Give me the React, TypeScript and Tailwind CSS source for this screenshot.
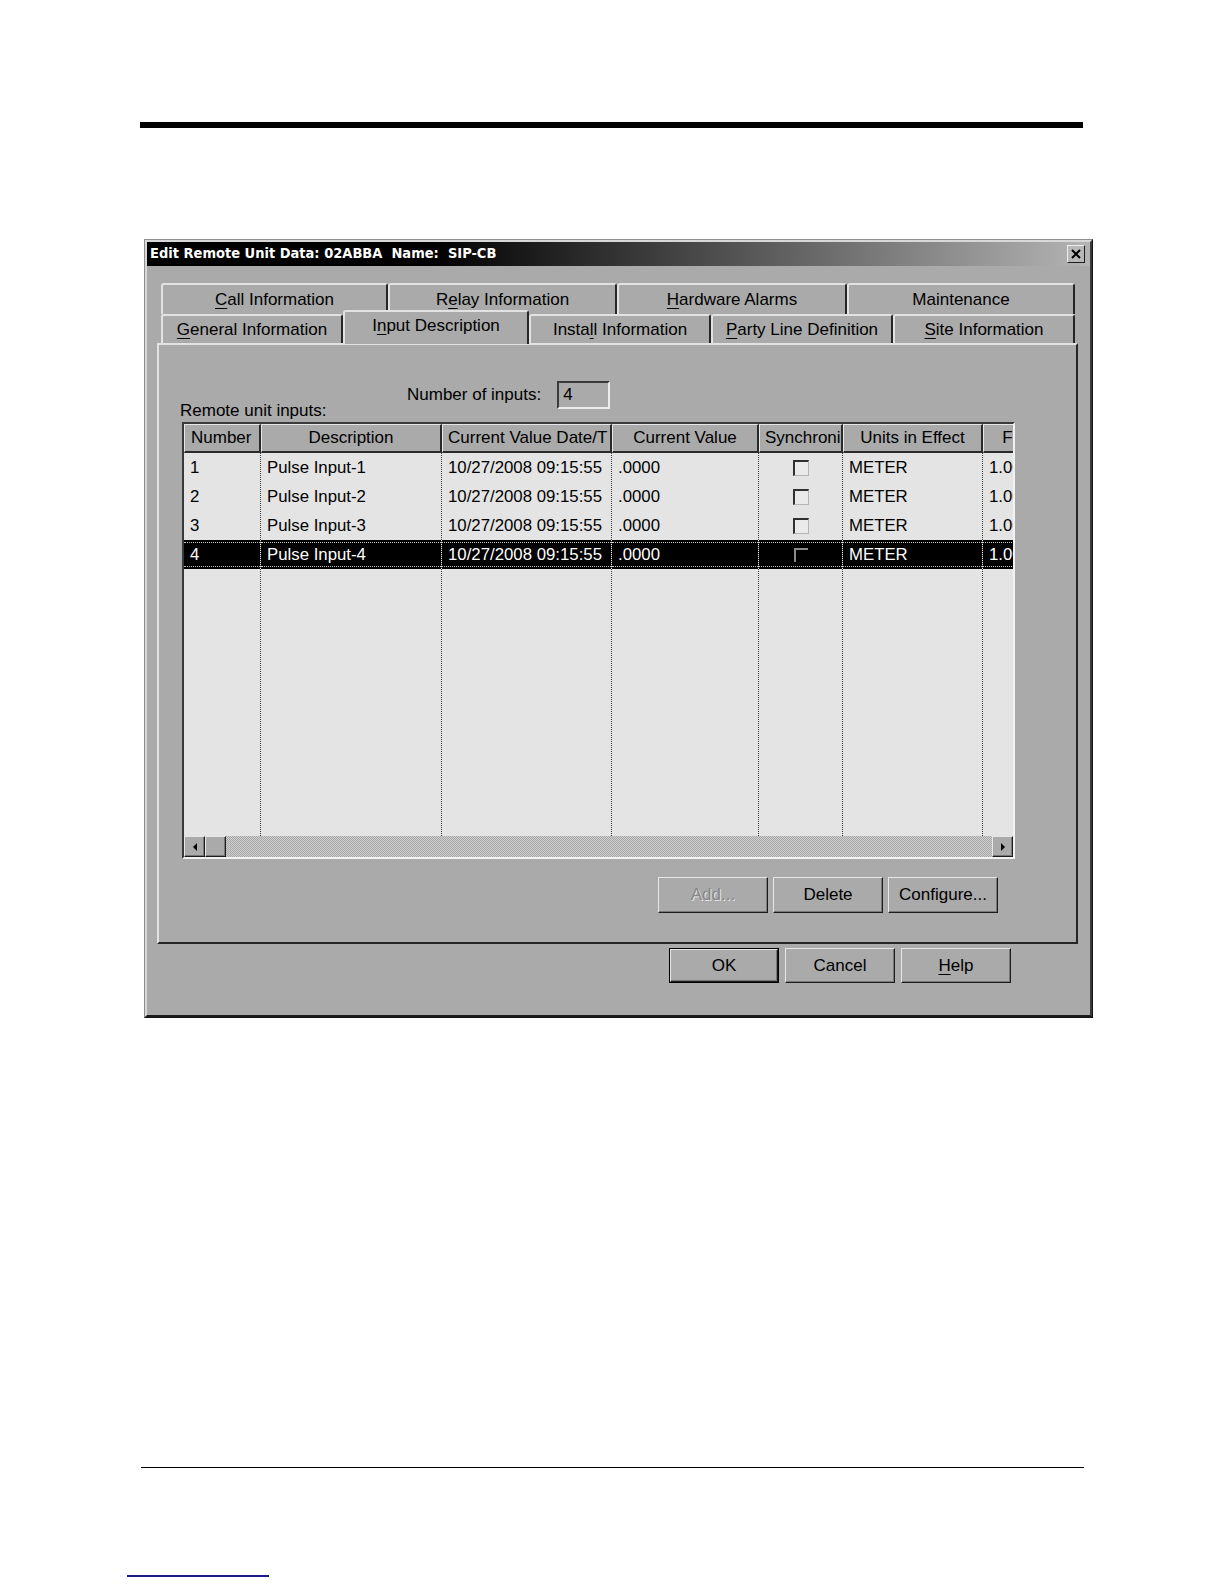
import React from 'react'

type Col = { w: string; title: string; head: string }

const cols: Col[] = [
  { w: 'w-[77px]', title: 'Number', head: 'justify-start pl-[6px]' },
  { w: 'w-[181px]', title: 'Description', head: 'justify-center' },
  { w: 'w-[170px]', title: 'Current Value Date/T', head: 'justify-start pl-[5px]' },
  { w: 'w-[147px]', title: 'Current Value', head: 'justify-center' },
  { w: 'w-[84px]', title: 'Synchroni', head: 'justify-start pl-[5px]' },
  { w: 'w-[140px]', title: 'Units in Effect', head: 'justify-center' },
  { w: 'w-[50px]', title: 'F', head: 'justify-center' },
]

const rows = [1, 2, 3, 4].map((n) => [
  String(n),
  `Pulse Input-${n}`,
  '10/27/2008 09:15:55',
  '.0000',
  'chk',
  'METER',
  '1.00',
])

const SELECTED = 3

function Mn({ t, i }: { t: string; i?: number }) {
  if (i === undefined) return <>{t}</>
  return (
    <>
      {t.slice(0, i)}
      <span className="underline underline-offset-[3px]">{t[i]}</span>
      {t.slice(i + 1)}
    </>
  )
}

function Tab({ label, u, w, sel, h }: { label: string; u?: number; w: string; sel?: boolean; h: string }) {
  return (
    <div
      className={`${w} shrink-0 flex items-center justify-center bg-[#aaaaaa] border-t-2 border-l-2 border-r-2 border-t-[#e2e2e2] border-l-[#e2e2e2] border-r-[#262626] rounded-t-[3px] whitespace-nowrap text-[17px] ${
        sel ? 'h-[34px] relative top-[1px] z-10 pb-[4px]' : h
      }`}
    >
      <Mn t={label} i={u} />
    </div>
  )
}

function Btn({ label, u, disabled, def, h }: { label: string; u?: number; disabled?: boolean; def?: boolean; h: string }) {
  return (
    <div className={`w-[110px] ${h} shrink-0 ${def ? 'border border-black' : ''}`}>
      <div
        className={`w-full h-full flex items-center justify-center bg-[#aaaaaa] border border-t-[#e6e6e6] border-l-[#e6e6e6] border-r-[#1c1c1c] border-b-[#1c1c1c] shadow-[inset_-1px_-1px_0_#777777] text-[17px] ${
          disabled ? 'text-[#878787] [text-shadow:1px_1px_0_#e4e4e4]' : 'text-black'
        }`}
      >
        <Mn t={label} i={u} />
      </div>
    </div>
  )
}

function Arrow({ dir }: { dir: 'l' | 'r' }) {
  return (
    <div className="w-[21px] h-[21px] shrink-0 flex items-center justify-center bg-[#aaaaaa] border border-t-[#e6e6e6] border-l-[#e6e6e6] border-r-[#1c1c1c] border-b-[#1c1c1c] shadow-[inset_-1px_-1px_0_#777777]">
      <svg width="6" height="10" viewBox="0 0 6 10">
        {dir === 'l' ? <polygon points="5,1 1,5 5,9" fill="#000" /> : <polygon points="1,1 5,5 1,9" fill="#000" />}
      </svg>
    </div>
  )
}

function Check({ sel }: { sel: boolean }) {
  if (sel) return <div className="w-[14px] h-[14px] border-t-2 border-l-2 border-[#8a8a8a]" />
  return (
    <div className="w-[16px] h-[16px] border-t-2 border-l-2 border-r border-b border-t-[#303030] border-l-[#303030] border-r-[#b4b4b4] border-b-[#b4b4b4] bg-[#eaeaea]" />
  )
}

function ListView() {
  return (
    <div className="ml-[23px] w-[833px] h-[437px] border-2 border-t-[#3a3a3a] border-l-[#3a3a3a] border-r-[#f2f2f2] border-b-[#f2f2f2] flex flex-col overflow-hidden">
      <div className="flex h-[29px] shrink-0">
        {cols.map((c) => (
          <div
            key={c.title}
            className={`${c.w} ${c.head} shrink-0 h-full flex items-center overflow-hidden whitespace-nowrap bg-[#aaaaaa] border-t border-l border-t-[#e6e6e6] border-l-[#e6e6e6] border-r-2 border-b-2 border-r-[#2a2a2a] border-b-[#2a2a2a] text-[17px]`}
          >
            {c.title}
          </div>
        ))}
      </div>
      <div className="flex h-[383px] shrink-0 bg-[#e4e4e4]">
        {cols.map((c, ci) => (
          <div key={c.title} className={`${c.w} shrink-0 h-full border-r border-dotted border-r-[#3a3a3a]`}>
            {rows.map((r, ri) => {
              const sel = ri === SELECTED
              const content =
                r[ci] === 'chk' ? (
                  <div className="w-full flex justify-center">
                    <Check sel={sel} />
                  </div>
                ) : (
                  r[ci]
                )
              return sel ? (
                <div key={ri} className="h-[29px] bg-black py-[2px] text-white">
                  <div className="h-full flex items-center px-[6px] whitespace-nowrap overflow-hidden border-y border-dotted border-[#bdbdbd] text-[16.8px]">
                    {content}
                  </div>
                </div>
              ) : (
                <div key={ri} className="h-[29px] flex items-center px-[6px] whitespace-nowrap overflow-hidden text-[16.8px]">
                  {content}
                </div>
              )
            })}
          </div>
        ))}
      </div>
      <div className="flex h-[21px] shrink-0">
        <Arrow dir="l" />
        <div className="w-[21px] h-[21px] shrink-0 bg-[#aaaaaa] border border-t-[#e6e6e6] border-l-[#e6e6e6] border-r-[#1c1c1c] border-b-[#1c1c1c] shadow-[inset_-1px_-1px_0_#777777]" />
        <div className="flex-1 bg-[repeating-conic-gradient(#d2d2d2_0_25%,#a4a4a4_0_50%)] bg-[length:2px_2px]" />
        <Arrow dir="r" />
      </div>
    </div>
  )
}

export default function App() {
  return (
    <div className="w-[1224px] h-[1584px] bg-white text-black font-['Liberation_Sans',Arial,sans-serif] flex flex-col">
      <div className="mt-[122px] ml-[140px] w-[943px] h-[6px] bg-black" />

      <div className="mt-[111px] ml-[144px] w-[949px] h-[779px] border border-t-[#8e8e8e] border-l-[#8e8e8e] border-r-[#141414] border-b-[#141414]">
        <div className="w-full h-full border-2 border-t-[#d8d8d8] border-l-[#d8d8d8] border-r-[#3a3a3a] border-b-[#1a1a1a] bg-[#aaaaaa] flex flex-col">
          <div className="h-[24px] shrink-0 flex items-center justify-between pl-[3px] pr-[5px] bg-[linear-gradient(to_right,#000_0%,#000_30%,#b4b4b4_100%)]">
            <span className="text-white font-bold text-[14.5px] whitespace-pre font-['DejaVu_Sans_Condensed','Liberation_Sans',sans-serif]">
              Edit Remote Unit Data: 02ABBA  Name:  SIP-CB
            </span>
            <div className="w-[18px] h-[18px] flex items-center justify-center bg-[#b8b8b8] border border-t-[#eeeeee] border-l-[#eeeeee] border-r-[#1c1c1c] border-b-[#1c1c1c]">
              <svg width="10" height="10" viewBox="0 0 10 10">
                <path d="M1 1 L9 9 M9 1 L1 9" stroke="#000" strokeWidth="2" />
              </svg>
            </div>
          </div>

          <div className="pl-[10px] mt-[17px] flex flex-col">
            <div className="flex pl-[4px]">
              <Tab label="Call Information" u={0} w="w-[227px]" h="h-[31px]" />
              <Tab label="Relay Information" u={1} w="w-[229px]" h="h-[31px]" />
              <Tab label="Hardware Alarms" u={0} w="w-[230px]" h="h-[31px]" />
              <Tab label="Maintenance" w="w-[228px]" h="h-[31px]" />
            </div>
            <div className="flex pl-[4px] h-[29px] items-end">
              <Tab label="General Information" u={0} w="w-[182px]" h="h-[29px]" />
              <Tab label="Input Description" u={1} w="w-[186px]" h="h-[29px]" sel />
              <Tab label="Install Information" u={5} w="w-[182px]" h="h-[29px]" />
              <Tab label="Party Line Definition" u={0} w="w-[182px]" h="h-[29px]" />
              <Tab label="Site Information" u={0} w="w-[182px]" h="h-[29px]" />
            </div>

            <div className="w-[921px] h-[601px] border-2 border-t-[#e2e2e2] border-l-[#e2e2e2] border-r-[#262626] border-b-[#262626] flex flex-col">
              <div className="mt-[36px] h-[41px] flex text-[17px]">
                <div className="ml-[21px] w-[227px] self-end mb-[2px] leading-[18px] whitespace-nowrap">Remote unit inputs:</div>
                <div className="self-start flex items-center gap-[16px] h-[28px]">
                  <span className="whitespace-nowrap">Number of inputs:</span>
                  <div className="w-[53px] h-[28px] flex items-center pl-[4px] border-2 border-t-[#3a3a3a] border-l-[#3a3a3a] border-r-[#ececec] border-b-[#ececec]">
                    4
                  </div>
                </div>
              </div>

              <ListView />

              <div className="mt-[18px] flex justify-end gap-[5px] pr-[78px]">
                <Btn label="Add..." disabled h="h-[36px]" />
                <Btn label="Delete" h="h-[36px]" />
                <Btn label="Configure..." h="h-[36px]" />
              </div>
            </div>

            <div className="mt-[4px] flex gap-[6px] pl-[512px]">
              <Btn label="OK" def h="h-[35px]" />
              <Btn label="Cancel" h="h-[35px]" />
              <Btn label="Help" u={0} h="h-[35px]" />
            </div>
          </div>
        </div>
      </div>

      <div className="mt-[449px] ml-[141px] w-[943px] h-px bg-black" />
      <div className="mt-[107px] ml-[127px] w-[142px] h-[2px] bg-[#1c1c8c]" />
    </div>
  )
}
